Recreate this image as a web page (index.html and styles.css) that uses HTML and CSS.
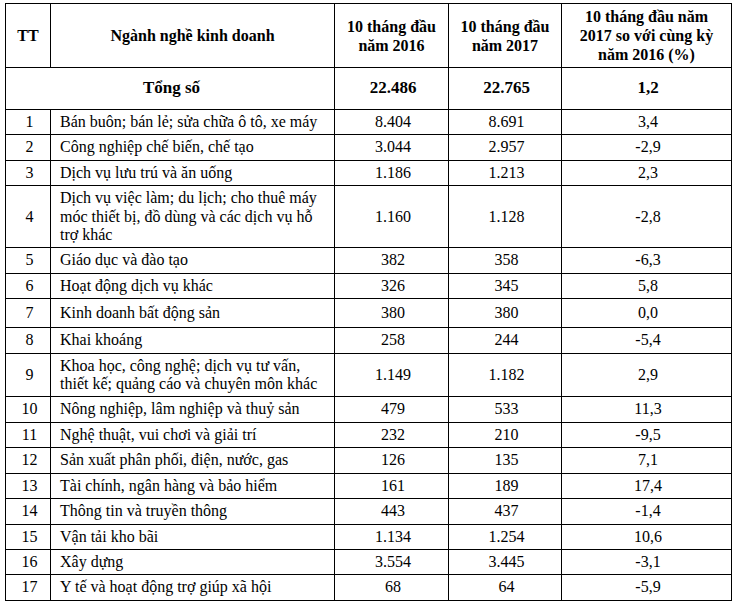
FILE: index.html
```html
<!DOCTYPE html>
<html lang="vi">
<head>
<meta charset="utf-8">
<title>Bảng</title>
<link rel="stylesheet" href="styles.css">
</head>
<body>
<table class="data">
<colgroup>
<col class="c-tt"><col class="c-name"><col class="c-n1"><col class="c-n2"><col class="c-pct">
</colgroup>
<thead>
<tr class="head">
<th>TT</th>
<th>Ngành nghề kinh doanh</th>
<th>10 tháng đầu<br>năm 2016</th>
<th>10 tháng đầu<br>năm 2017</th>
<th>10 tháng đầu năm<br>2017 so với cùng kỳ<br>năm 2016 (%)</th>
</tr>
</thead>
<tbody>
<tr class="total">
<td colspan="2">Tổng số</td>
<td>22.486</td>
<td>22.765</td>
<td>1,2</td>
</tr>
<tr><td>1</td><td class="name">Bán buôn; bán lẻ; sửa chữa ô tô, xe máy</td><td>8.404</td><td>8.691</td><td>3,4</td></tr>
<tr><td>2</td><td class="name">Công nghiệp chế biến, chế tạo</td><td>3.044</td><td>2.957</td><td>-2,9</td></tr>
<tr><td>3</td><td class="name">Dịch vụ lưu trú và ăn uống</td><td>1.186</td><td>1.213</td><td>2,3</td></tr>
<tr><td>4</td><td class="name">Dịch vụ việc làm; du lịch; cho thuê máy móc thiết bị, đồ dùng và các dịch vụ hỗ trợ khác</td><td>1.160</td><td>1.128</td><td>-2,8</td></tr>
<tr><td>5</td><td class="name">Giáo dục và đào tạo</td><td>382</td><td>358</td><td>-6,3</td></tr>
<tr><td>6</td><td class="name">Hoạt động dịch vụ khác</td><td>326</td><td>345</td><td>5,8</td></tr>
<tr class="tall"><td>7</td><td class="name">Kinh doanh bất động sản</td><td>380</td><td>380</td><td>0,0</td></tr>
<tr><td>8</td><td class="name">Khai khoáng</td><td>258</td><td>244</td><td>-5,4</td></tr>
<tr><td>9</td><td class="name">Khoa học, công nghệ; dịch vụ tư vấn, thiết kế; quảng cáo và chuyên môn khác</td><td>1.149</td><td>1.182</td><td>2,9</td></tr>
<tr><td>10</td><td class="name">Nông nghiệp, lâm nghiệp và thuỷ sản</td><td>479</td><td>533</td><td>11,3</td></tr>
<tr><td>11</td><td class="name">Nghệ thuật, vui chơi và giải trí</td><td>232</td><td>210</td><td>-9,5</td></tr>
<tr><td>12</td><td class="name">Sản xuất phân phối, điện, nước, gas</td><td>126</td><td>135</td><td>7,1</td></tr>
<tr><td>13</td><td class="name">Tài chính, ngân hàng và bảo hiểm</td><td>161</td><td>189</td><td>17,4</td></tr>
<tr><td>14</td><td class="name">Thông tin và truyền thông</td><td>443</td><td>437</td><td>-1,4</td></tr>
<tr><td>15</td><td class="name">Vận tải kho bãi</td><td>1.134</td><td>1.254</td><td>10,6</td></tr>
<tr><td>16</td><td class="name">Xây dựng</td><td>3.554</td><td>3.445</td><td>-3,1</td></tr>
<tr><td>17</td><td class="name">Y tế và hoạt động trợ giúp xã hội</td><td>68</td><td>64</td><td>-5,9</td></tr>
</tbody>
</table>
</body>
</html>
```
FILE: styles.css
```css
html, body {
  margin: 0;
  padding: 0;
  background: #ffffff;
}
body {
  padding: 3px 0 0 5px;
  font-family: "Liberation Serif", "Times New Roman", serif;
  font-size: 16px;
  color: #000000;
}
.data {
  border-collapse: collapse;
  table-layout: fixed;
  width: 726px;
}
.c-tt { width: 45px; }
.c-name { width: 284px; }
.c-n1 { width: 114px; }
.c-n2 { width: 113px; }
.c-pct { width: 170px; }
.data th,
.data td {
  border: 1px solid #000000;
  padding: 3px 6px 3px 9px;
  line-height: 18.4px;
  text-align: center;
  vertical-align: middle;
}
.data td.name {
  text-align: left;
}
.head th {
  font-weight: bold;
  line-height: 19px;
  padding: 3px 4px;
  height: 56px;
}
.total td {
  font-weight: bold;
  font-size: 17px;
  height: 35px;
}
.tall td {
  height: 22px;
}
```
